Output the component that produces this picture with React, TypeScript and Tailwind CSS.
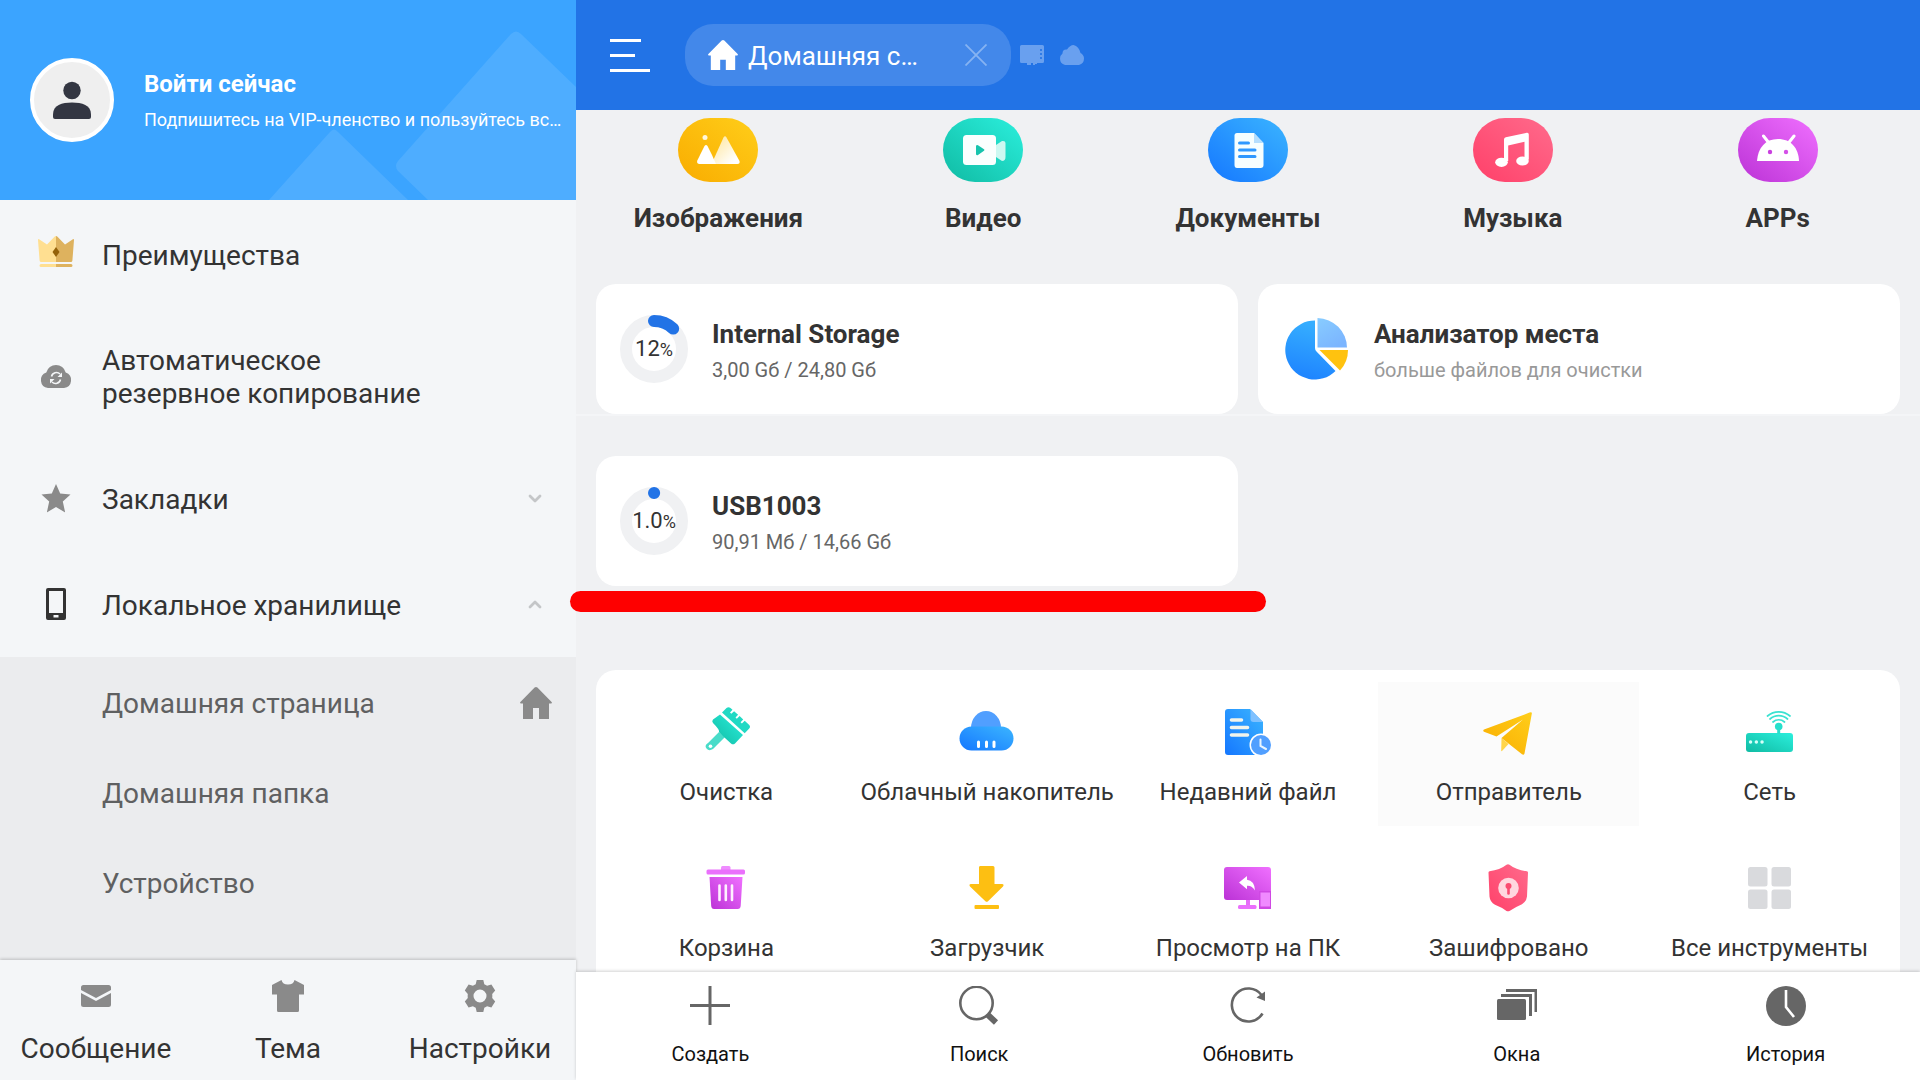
import type { ReactNode } from "react";

/* ---------- shared gradients ---------- */

function Gradients() {
  const list: [string, string, string][] = [
    ["gYellow", "#f9ac00", "#ffce1a"],
    ["gTeal", "#10bba3", "#2befdd"],
    ["gBlue", "#1577ff", "#3bb5ff"],
    ["gPink", "#ff4069", "#ff6b8c"],
    ["gPurple", "#bb32d6", "#f070ff"],
  ];
  return (
    <svg className="absolute size-0" aria-hidden="true">
      <defs>
        {list.map(([id, from, to]) => (
          <linearGradient key={id} id={id} x1="0" y1="1" x2="1" y2="0">
            <stop offset="0" stopColor={from} />
            <stop offset="1" stopColor={to} />
          </linearGradient>
        ))}
        <linearGradient id="gPie" x1="0" y1="1" x2="0.2" y2="0">
          <stop offset="0" stopColor="#1c80ff" />
          <stop offset="1" stopColor="#35adff" />
        </linearGradient>
        <linearGradient id="gPieLight" x1="0" y1="0" x2="0.6" y2="1">
          <stop offset="0" stopColor="#88ccff" />
          <stop offset="1" stopColor="#7bb5ff" />
        </linearGradient>
        <linearGradient id="gPeak" x1="0" y1="0.3" x2="0.7" y2="1">
          <stop offset="0" stopColor="#ffe9a8" />
          <stop offset="1" stopColor="#ffffff" />
        </linearGradient>
      </defs>
    </svg>
  );
}

function Icon({ box, className, children }: { box: string; className: string; children: ReactNode }) {
  return (
    <svg viewBox={box} className={`shrink-0 ${className}`} aria-hidden="true">
      {children}
    </svg>
  );
}

/* ---------- sidebar icons ---------- */

const Crown = () => (
  <Icon box="0 0 36 36" className="size-9">
    <path d="M0 4q0-1.500 1.500-.5L9 8.500 16.500.8Q17.200 0 18 0v26H3.200Q1.700 26 1.600 24.500z" fill="#ffdf91" />
    <path d="M36 4q0-1.500-1.500-.5L27 8.500 19.500.8Q18.800 0 18 0v26h14.800q1.500 0 1.600-1.500z" fill="#deb25e" />
    <path d="M18 11l3.500 5-3.500 5-3.500-5z" fill="#94620a" />
    <path d="M18 28H3a1.500 1.500 0 0 0 0 3h15z" fill="#ffdf91" />
    <path d="M18 28h15a1.500 1.500 0 0 1 0 3H18z" fill="#deb25e" />
  </Icon>
);

const CloudSync = () => (
  <Icon box="0 0 32 24" className="h-6 w-8">
    <path d="M8 24a8 8 0 0 1-1.700-15.500a10 10 0 0 1 19.400 0A8 8 0 0 1 24 24z" fill="#8a8a8a" />
    <g fill="none" stroke="#f4f6f8" strokeWidth="1.600">
      <path d="M11.500 12.500a5 5 0 0 1 8.500-2.500M20.500 15.500a5 5 0 0 1-8.500 2.500" />
    </g>
    <path d="M22 8.500v4.500h-4.500zM10 19.500V15h4.500z" fill="#f4f6f8" />
  </Icon>
);

const Star = () => (
  <Icon box="0 0 30 30" className="size-[30px]">
    <path
      d="M15 1l4.200 9.500 10.300 1.100-7.700 6.900L24 28.700q.1.800-.6.400L15 24l-8.400 5.100q-.7.400-.6-.4l2.200-10.200L.5 11.600l10.300-1.100z"
      fill="#8a8a8a"
    />
  </Icon>
);

const Phone = () => (
  <Icon box="0 0 20 32" className="h-8 w-5">
    <path
      fillRule="evenodd"
      d="M2 0h16a2 2 0 0 1 2 2v28a2 2 0 0 1-2 2H2a2 2 0 0 1-2-2V2a2 2 0 0 1 2-2zM3 3v22h14V3zM7.500 27v2.500h5V27z"
      fill="#333"
    />
  </Icon>
);

const House = ({ className }: { className: string }) => (
  <Icon box="0 0 32 32" className={className}>
    <path
      d="M14.600.6q1.400-1.200 2.800 0L31.600 15q.9 1.300-.6 1.600H29V32H19V21h-6v11H3V16.600H1Q-.5 16.300.4 15z"
      fill="currentColor"
    />
  </Icon>
);

const Chevron = ({ up }: { up?: boolean }) => (
  <Icon box="0 0 14 9" className="h-[9px] w-3.5 text-[#c4c6c8]">
    <path
      d={up ? "M2 7l5-5 5 5" : "M2 2l5 5 5-5"}
      fill="none"
      stroke="currentColor"
      strokeWidth="2.800"
      strokeLinecap="round"
      strokeLinejoin="round"
    />
  </Icon>
);

const Mail = () => (
  <Icon box="0 0 32 32" className="size-8">
    <path d="M1 10V7.500A2.500 2.500 0 0 1 3.500 5h25A2.500 2.500 0 0 1 31 7.500V10l-15 8z" fill="#8a8a8a" />
    <path d="M1 13l15 8 15-8v11.500a2.500 2.500 0 0 1-2.500 2.500h-25A2.500 2.500 0 0 1 1 24.500z" fill="#8a8a8a" />
  </Icon>
);

const Shirt = () => (
  <Icon box="0 0 32 32" className="size-8">
    <path
      d="M9.500 0q1 4.500 6.500 4.500T22.500 0L32 5v9.500h-5V30.500q0 1.500-1.500 1.500h-19Q5 32 5 30.500v-16H0V5z"
      fill="#8a8a8a"
    />
  </Icon>
);

const Gear = () => (
  <Icon box="0 0 32 32" className="size-8">
    <path
      fillRule="evenodd"
      d="M12.700 0h6.600l1 4.200q1.500.6 2.800 1.500l4.300-1.300 3.800 6-3 3.500q.3 2.100 0 4.200l3 3.500-3.800 6-4.300-1.300q-1.300.9-2.800 1.500l-1 4.200h-6.600l-1-4.200q-1.500-.6-2.800-1.500l-4.300 1.300-3.800-6 3-3.500q-.3-2.100 0-4.200l-3-3.500 3.800-6 4.300 1.300q1.300-.9 2.800-1.500zM16 9.500a6.500 6.500 0 1 0 0 13 6.500 6.500 0 0 0 0-13z"
      fill="#8a8a8a"
    />
  </Icon>
);

/* ---------- category icons, 80 x 64 ---------- */

function Badge({ fill, children }: { fill: string; children: ReactNode }) {
  return (
    <Icon box="0 0 80 64" className="h-16 w-20">
      <rect width="80" height="64" rx="32" fill={fill} />
      {children}
    </Icon>
  );
}

const Pictures = () => (
  <Badge fill="url(#gYellow)">
    <circle cx="27" cy="19.500" r="2.500" fill="#fff7dc" />
    <path d="M34 45L45.500 19.500q1.500-2.500 3 0L61.500 43q.7 3-2 3H34z" fill="url(#gPeak)" />
    <path d="M19.300 42.500L26.500 28q1.500-2 3 0l4.500 9 4 9H21q-2.500-.5-1.700-3.500z" fill="#fff" />
  </Badge>
);

const Video = () => (
  <Badge fill="url(#gTeal)">
    <path d="M53 27l6-4q3.500-.5 3.500 2v14q0 4-3.500 4l-6-4z" fill="#cdf8f1" />
    <rect x="20" y="17" width="33" height="30" rx="3.500" fill="#fafffe" />
    <path d="M33 28q.5-1.500 2-.7l6 4q1 .7 0 1.400l-6 4.300q-1.500.7-2-.7z" fill="#17c4ad" />
  </Badge>
);

const Documents = () => (
  <Badge fill="url(#gBlue)">
    <path d="M29 15h17l9.500 10v22q0 3-3 3H29q-2.500 0-2.500-3V17.500q0-2.500 2.500-2.500z" fill="#f6feff" />
    <path d="M46 15l9.500 10H46z" fill="#b5defe" />
    <path d="M31.500 25h9M31.500 32h15.500M31.500 38.500h15.500" stroke="#2f98ff" strokeWidth="3" strokeLinecap="round" />
  </Badge>
);

const Music = () => (
  <Badge fill="url(#gPink)">
    <path d="M31 21.500q0-1.800 1.800-2.200l21-4.500q2-.3 2 1.700v25h-4.300V23.800l-16.300 3.700V43H31z" fill="#fff" />
    <ellipse cx="28.500" cy="44.300" rx="6.300" ry="4.600" fill="#fff" />
    <ellipse cx="49.500" cy="43" rx="6.300" ry="4.600" fill="#fff" />
  </Badge>
);

const Android = () => (
  <Badge fill="url(#gPurple)">
    <path d="M19 43C20 30 27 21 40 21S60.500 30 61 43z" fill="#fff" />
    <path d="M25.500 18l5.500 7M56 18l-5.500 7" stroke="#fff" strokeWidth="3" strokeLinecap="round" />
    <circle cx="32" cy="34" r="2.200" fill="#c93fdf" />
    <circle cx="48" cy="34" r="2.200" fill="#d450e8" />
  </Badge>
);

/* ---------- tool icons, 64 x 64 ---------- */

const Tool = ({ children }: { children: ReactNode }) => (
  <Icon box="0 0 64 64" className="size-16">
    {children}
  </Icon>
);

const Brush = () => (
  <Tool>
    <path d="M25 32l6 5-12 12q-4 2.500-6.500-.5T14 43z" fill="#49dcc9" />
    <circle cx="16.500" cy="46.300" r="1.800" fill="#fff" />
    <path d="M26 14.500L49 35l-8 8.500q-2 1.700-4 0L31 38l-6-6q1-2-6-9-1.500-1.800 0-3.500z" fill="url(#gTeal)" />
    <path
      d="M28 12.500L32.500 8q2-1.700 4 0l2 1.800-2.500 2.700 1.300 1.200 2.800-2.500 4 3.600-2.600 2.700 1.300 1.200 2.800-2.600 3.600 3.300-2.600 2.800 1.300 1.200 2.800-2.700 4.300 4q2 2 0 4l-4.300 4.600z"
      fill="#21d9c4"
    />
  </Tool>
);

const CloudDrive = () => (
  <Tool>
    <path d="M16 28a15 17 0 0 1 30 0v8H16z" fill="#519fff" />
    <rect x="4.500" y="26.500" width="54" height="24" rx="12" fill="url(#gBlue)" />
    <path d="M23.500 42v4.500M31.500 42v4.500M39 42v4.500" stroke="#fff" strokeWidth="3" strokeLinecap="round" />
  </Tool>
);

const RecentFile = () => (
  <Tool>
    <path d="M12 9h22l13 13v29q0 4-3 4H12q-3 0-3-3V12q0-3 3-3z" fill="url(#gBlue)" />
    <path d="M34.500 9L47 22H37.500q-3 0-3-3z" fill="#80c1ff" />
    <path d="M15.500 20h10M15.500 27.500h16M15.500 35h16" stroke="#f1f4ec" strokeWidth="3.600" strokeLinecap="round" />
    <circle cx="45" cy="45" r="11.500" fill="#fff" />
    <circle cx="45" cy="45" r="10" fill="#519fff" />
    <path d="M44.500 39.500v6.500l5.500 3" fill="none" stroke="#eaf6ff" strokeWidth="2" strokeLinecap="round" />
  </Tool>
);

const Plane = () => (
  <Tool>
    <path d="M24.500 38l7 6-6.500 7q-.8.500-.8-.5z" fill="#ffd54a" />
    <path d="M52.500 12.600q2.700-1.300 2.300 1.200L47.500 53.500q-.7 2-2.500.8L24.500 38 46 19.500 19.500 36.500 7 31.800q-1.500-1 0-2.200z" fill="url(#gYellow)" />
  </Tool>
);

const Router = () => (
  <Tool>
    <rect x="8" y="33" width="47" height="19" rx="3" fill="url(#gTeal)" />
    <path d="M12.500 42h.1M18.300 42h.1M24 42h.1" stroke="#d6fff8" strokeWidth="3.400" strokeLinecap="round" />
    <circle cx="40.700" cy="26.500" r="3.800" fill="#26dfcc" />
    <path d="M40.700 28v6" stroke="#26dfcc" strokeWidth="3" />
    <path
      d="M35 22a8.500 8.500 0 0 1 11.500 0M32 19a13 13 0 0 1 17.500 0M29.500 16a17.500 17.500 0 0 1 22.500 0"
      fill="none"
      stroke="#3ae2d1"
      strokeWidth="1.700"
      strokeLinecap="round"
    />
  </Tool>
);

const Trash = () => (
  <Tool>
    <rect x="27" y="10" width="9.500" height="6" rx="1.500" fill="#ef8cff" />
    <rect x="12.500" y="13.500" width="38.500" height="5" rx="1.500" fill="#ea70fc" />
    <path d="M15.500 21h33l-1.800 29q-.3 3-3 3H20q-2.500 0-2.800-3z" fill="url(#gPurple)" />
    <path d="M25.500 29.500V44M31.800 29.500V44M38 29.500V44" stroke="#fff0ff" strokeWidth="2.600" strokeLinecap="round" />
  </Tool>
);

const Download = () => (
  <Tool>
    <path d="M25 10h13q1.500 0 1.500 1.500V28H47q2.500.4 1 2.500L33 45.300q-1.300 1-2.600 0L15 30.500q-1.500-2.100 1-2.500h8V11.500q0-1.500 1-1.500z" fill="#fdbf12" />
    <rect x="19.500" y="49" width="24.500" height="4" rx="1" fill="#fdbf12" />
  </Tool>
);

const ViewOnPc = () => (
  <Tool>
    <path d="M30 43h4v8h-4z" fill="#e66cf8" />
    <rect x="22" y="49" width="18.500" height="4" rx="1.500" fill="#ea70fc" />
    <rect x="8" y="11" width="47" height="33" rx="3" fill="url(#gPurple)" />
    <path d="M23 26.500l8-6.500v3.800q7.500.8 8 10.700-3-5.300-8-4.800v3.600z" fill="#fff" />
    <rect x="43" y="35" width="12" height="18" fill="#cf48e3" />
    <rect x="44.500" y="36.500" width="9.500" height="14" fill="#f08aff" />
  </Tool>
);

const Shield = () => (
  <Tool>
    <path d="M29.500 8.800q1.500-1 3 0Q39 14 50 15.300q1 .3 1 1.200l-1 24q-.5 5-5 7.800-7 3-12.500 6.700-1.500.7-3 0-5-3.700-11.500-6.200-5-2.800-5.500-8.300l-1-24q0-.9 1-1.200Q23 14 29.500 8.800z" fill="url(#gPink)" />
    <circle cx="31.500" cy="32" r="10.300" fill="#ffd7df" />
    <circle cx="31.500" cy="30" r="3" fill="#fa4c71" />
    <path d="M31.500 30v7.500" stroke="#fa4c71" strokeWidth="2.600" strokeLinecap="round" />
  </Tool>
);

const AllTools = () => (
  <Tool>
    {[
      [10, 11],
      [33.5, 11],
      [10, 33.5],
      [33.5, 33.5],
    ].map(([x, y]) => (
      <rect key={`${x}-${y}`} x={x} y={y} width="19.500" height="19.500" rx="2.500" fill="#d9dadd" />
    ))}
  </Tool>
);

/* ---------- bottom bar icons, 40 x 40 ---------- */

const Bar = ({ children }: { children: ReactNode }) => (
  <Icon box="0 0 40 40" className="size-10">
    {children}
  </Icon>
);

const Plus = () => (
  <Bar>
    <path d="M20 0v39M0 19.500h40" stroke="#666" strokeWidth="3" />
  </Bar>
);
const Search = () => (
  <Bar>
    <circle cx="17.500" cy="17" r="16.200" fill="none" stroke="#666" strokeWidth="2.600" />
    <path d="M28.500 28.500l8.500 8" stroke="#666" strokeWidth="6" />
  </Bar>
);
const Refresh = () => (
  <Bar>
    <path d="M34.500 27.500a16.500 16.500 0 1 1-1-18.500" fill="none" stroke="#666" strokeWidth="2.600" />
    <path d="M37 5.500v9.500l-8.500-3.500z" fill="#666" />
  </Bar>
);
const Windows = () => (
  <Bar>
    <rect x="0" y="13" width="29" height="21" rx="1.500" fill="#666" />
    <path d="M4 9.500h29.500V30M9 4.500h30V26" fill="none" stroke="#666" strokeWidth="3" />
  </Bar>
);
const History = () => (
  <Bar>
    <circle cx="20" cy="20" r="20" fill="#666" />
    <path d="M20 4v17l8 10" fill="none" stroke="#fff" strokeWidth="2.600" />
  </Bar>
);

/* ---------- cards ---------- */

function Ring({ percent }: { percent: number }) {
  const angle = (percent / 100) * 2 * Math.PI;
  const x = 34 + 28 * Math.sin(angle);
  const y = 34 - 28 * Math.cos(angle);
  return (
    <svg viewBox="0 0 68 68" className="col-start-1 row-start-1 size-[68px]" aria-hidden="true">
      <circle cx="34" cy="34" r="28" fill="none" stroke="#f0f1f3" strokeWidth="12" />
      <path d={`M34 6A28 28 0 0 1 ${x} ${y}`} fill="none" stroke="#2273e6" strokeWidth="12" strokeLinecap="round" />
    </svg>
  );
}

function Card({ icon, title, note, noteClass }: { icon: ReactNode; title: string; note: string; noteClass: string }) {
  return (
    <button type="button" className="flex h-[130px] items-center gap-6 rounded-[20px] bg-white pl-6 text-left">
      {icon}
      <span className="flex flex-col gap-2 pt-0.5">
        <span className="text-[26px] leading-8 font-bold text-[#333]">{title}</span>
        <span className={`text-xl leading-6 ${noteClass}`}>{note}</span>
      </span>
    </button>
  );
}

function StorageCard({ percent, label, title, note }: { percent: number; label: string; title: string; note: string }) {
  return (
    <Card
      title={title}
      note={note}
      noteClass="text-[#666]"
      icon={
        <span className="grid size-[68px] shrink-0 place-items-center">
          <Ring percent={percent} />
          <span className="col-start-1 row-start-1 text-[22px] leading-6 text-[#333]">
            {label}
            <span className="text-lg leading-6">%</span>
          </span>
        </span>
      }
    />
  );
}

const Pie = () => (
  <Icon box="0 0 68 68" className="size-[68px]">
    <path d="M33 5.500A29.500 29.500 0 1 0 53.500 56L34.500 36.500Q33 35 33 33z" fill="url(#gPie)" />
    <path d="M35.500 3A30 30 0 0 1 65 32.500H35.500z" fill="url(#gPieLight)" />
    <path d="M37.500 35H66a30 30 0 0 1-8 20.500z" fill="#ffc20f" />
  </Icon>
);

/* ---------- page ---------- */

const categories = [
  { label: "Изображения", icon: <Pictures /> },
  { label: "Видео", icon: <Video /> },
  { label: "Документы", icon: <Documents /> },
  { label: "Музыка", icon: <Music /> },
  { label: "APPs", icon: <Android /> },
];

const tools = [
  { label: "Очистка", icon: <Brush /> },
  { label: "Облачный накопитель", icon: <CloudDrive /> },
  { label: "Недавний файл", icon: <RecentFile /> },
  { label: "Отправитель", icon: <Plane />, active: true },
  { label: "Сеть", icon: <Router /> },
  { label: "Корзина", icon: <Trash /> },
  { label: "Загрузчик", icon: <Download /> },
  { label: "Просмотр на ПК", icon: <ViewOnPc /> },
  { label: "Зашифровано", icon: <Shield /> },
  { label: "Все инструменты", icon: <AllTools /> },
];

const actions = [
  { label: "Создать", icon: <Plus /> },
  { label: "Поиск", icon: <Search /> },
  { label: "Обновить", icon: <Refresh /> },
  { label: "Окна", icon: <Windows /> },
  { label: "История", icon: <History /> },
];

function MenuRow({ icon, children, end, tall }: { icon: ReactNode; children: ReactNode; end?: ReactNode; tall?: boolean }) {
  return (
    <button
      type="button"
      className={`flex w-full shrink-0 items-center pr-[34px] pl-9 text-left text-[28px] leading-[33px] text-[#333] ${tall ? "h-[138px]" : "h-[106px]"}`}
    >
      <span className="mr-[26px] flex w-10 justify-center">{icon}</span>
      <span className="flex-1 pt-0.5">{children}</span>
      {end}
    </button>
  );
}

function Sidebar() {
  return (
    <aside className="flex w-[30%] shrink-0 flex-col bg-[#f4f6f8]">
      <div className="relative h-[200px] shrink-0 overflow-hidden bg-[#3ba4ff]">
        <svg viewBox="0 0 320 200" className="absolute top-0 right-0 h-[200px] w-80" aria-hidden="true">
          <path d="M13 200L74 132q4-5 8 0l70 68z" fill="#4eadff" />
          <path d="M172 200l-30-29q-4-5 0-10L255 34q5-5 10 0l55 53v113z" fill="#4eadff" />
        </svg>
        <button type="button" className="relative flex size-full items-center gap-[30px] pr-3 pl-[30px] text-left text-white">
          <span className="grid size-[84px] shrink-0 place-items-center rounded-full border-4 border-white bg-[#efefef]">
            <Icon box="0 0 38 38" className="size-[38px]">
              <circle cx="19" cy="9.500" r="8.700" fill="#333642" />
              <path d="M0 33.500C0 24 9 21.500 19 21.500s19 2.500 19 12V36q0 2-2 2H2q-2 0-2-2z" fill="#333642" />
            </Icon>
          </span>
          <span className="flex flex-col gap-2 pt-1 whitespace-nowrap">
            <span className="text-2xl leading-7 font-bold">Войти сейчас</span>
            <span className="text-lg leading-7">Подпишитесь на VIP-членство и пользуйтесь вс…</span>
          </span>
        </button>
      </div>

      <nav className="flex min-h-0 flex-1 flex-col overflow-hidden pt-px">
        <MenuRow icon={<Crown />}>Преимущества</MenuRow>
        <MenuRow icon={<CloudSync />} tall>
          Автоматическое
          <br />
          резервное копирование
        </MenuRow>
        <MenuRow icon={<Star />} end={<Chevron />}>
          Закладки
        </MenuRow>
        <MenuRow icon={<Phone />} end={<Chevron up />}>
          Локальное хранилище
        </MenuRow>
        <div className="flex-1 bg-[#ebecee]">
          {["Домашняя страница", "Домашняя папка", "Устройство"].map((label, i) => (
            <button
              key={label}
              type="button"
              className="flex h-[90px] w-full items-center justify-between pt-0.5 pr-6 pl-[102px] text-left text-[28px] leading-[33px] text-[#5f6061]"
            >
              {label}
              {i === 0 && <House className="size-8 text-[#8a8a8a]" />}
            </button>
          ))}
        </div>
      </nav>

      <div className="relative grid h-[120px] shrink-0 grid-cols-3 shadow-[0_-1px_3px_rgba(0,0,0,0.2)]">
        {[
          { label: "Сообщение", icon: <Mail /> },
          { label: "Тема", icon: <Shirt /> },
          { label: "Настройки", icon: <Gear /> },
        ].map(({ label, icon }) => (
          <button key={label} type="button" className="flex flex-col items-center gap-5 pt-5 text-[28px] leading-[33px] text-[#333]">
            {icon}
            {label}
          </button>
        ))}
      </div>
    </aside>
  );
}

function Header() {
  return (
    <header className="flex h-[110px] shrink-0 items-center bg-[#2273e6] pl-[34px] text-white">
      <button type="button" aria-label="Меню" className="mr-[35px] flex w-10 flex-col gap-3">
        <span className="h-[3px] w-[31px] bg-white" />
        <span className="h-[3px] w-[25px] bg-white" />
        <span className="h-[3px] w-10 bg-white" />
      </button>
      <div className="flex h-[62px] w-[326px] items-center rounded-[28px] bg-[#4388ea] pr-6 pl-[23px]">
        <House className="mr-2.5 size-[30px]" />
        <span className="flex-1 pt-0.5 text-[26px] leading-8">Домашняя с…</span>
        <button type="button" aria-label="Закрыть">
          <Icon box="0 0 22 22" className="size-[22px]">
            <path d="M.5.5l21 21M21.500.5l-21 21" stroke="#86b3f2" strokeWidth="1.800" />
          </Icon>
        </button>
      </div>
      <Icon box="0 0 24 20" className="ml-[9px] h-5 w-6">
        <path d="M1.500 0h21Q24 0 24 1.500v15q0 1.500-1.500 1.500H17v1h-2v1h-2v-2h-2v2H7v-2H1.500Q0 18 0 16.500v-15Q0 0 1.500 0z" fill="#69a0ef" />
        <path d="M21 4v12" stroke="#2f7ce8" strokeWidth="2" strokeDasharray="2 2" />
      </Icon>
      <Icon box="0 0 24 20" className="ml-4 h-5 w-6">
        <path d="M5 20Q0 18.500 0 13.500 0 10.500 2.500 8.500 2.500 4 7 4.500 10 0 13.500 0 19 1.500 20.500 8 24 10 24 13.500 24 18.500 19 20z" fill="#69a0ef" />
      </Icon>
    </header>
  );
}

export default function App() {
  return (
    <div className="flex h-screen overflow-hidden font-['Roboto',sans-serif]">
      <Gradients />
      <Sidebar />
      <main className="flex min-w-0 flex-1 flex-col bg-[#f0f1f3]">
        <Header />
        <div className="flex min-h-0 flex-1 flex-col">
          <div className="grid shrink-0 grid-cols-5 px-2.5 pt-2">
            {categories.map(({ label, icon }) => (
              <button key={label} type="button" className="flex flex-col items-center gap-5 text-[26px] leading-8 font-bold text-[#333]">
                {icon}
                {label}
              </button>
            ))}
          </div>

          <div className="mt-[50px] grid shrink-0 grid-cols-2 gap-5 border-b-2 border-[#f4f5f7] px-5">
            <StorageCard percent={12} label="12" title="Internal Storage" note="3,00 Gб / 24,80 Gб" />
            <Card icon={<Pie />} title="Анализатор места" note="больше файлов для очистки" noteClass="text-[#999]" />
          </div>

          <div className="mt-10 grid shrink-0 grid-cols-2 gap-5 px-5">
            <div className="relative grid">
              <StorageCard percent={0.1} label="1.0" title="USB1003" note="90,91 Mб / 14,66 Gб" />
              <span className="absolute top-[135px] -right-7 -left-[26px] h-[21px] rounded-full bg-[#fe0000]" />
            </div>
          </div>

          <div className="mx-5 mt-[84px] grid shrink-0 grid-cols-5 gap-y-3 rounded-t-[20px] bg-white py-3">
            {tools.map(({ label, icon, active }) => (
              <button
                key={label}
                type="button"
                className={`flex h-36 flex-col items-center gap-3.5 pt-[18px] text-2xl leading-7 whitespace-nowrap text-[#333] ${active ? "bg-[#fbfbfb]" : ""}`}
              >
                {icon}
                {label}
              </button>
            ))}
          </div>
        </div>

        <footer className="relative grid h-[108px] shrink-0 grid-cols-5 bg-white shadow-[0_-1px_3px_rgba(0,0,0,0.18)]">
          {actions.map(({ label, icon }) => (
            <button key={label} type="button" className="flex flex-col items-center gap-4 pt-3.5 text-xl leading-6 text-[#111]">
              {icon}
              {label}
            </button>
          ))}
        </footer>
      </main>
    </div>
  );
}
